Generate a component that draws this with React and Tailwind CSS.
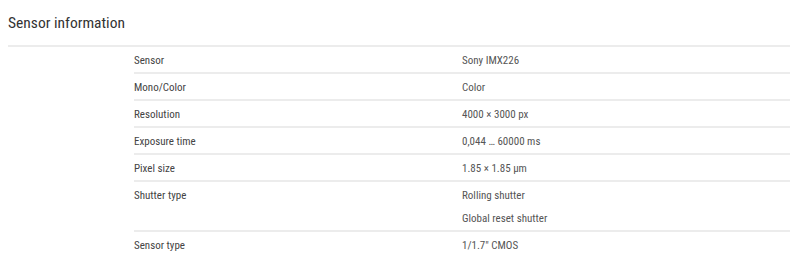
export default function App() {
  const rows = [
    ["Sensor", ["Sony IMX226"]],
    ["Mono/Color", ["Color"]],
    ["Resolution", ["4000 × 3000 px"]],
    ["Exposure time", ["0,044 … 60000 ms"]],
    ["Pixel size", ["1.85 × 1.85 µm"]],
    ["Shutter type", ["Rolling shutter", "Global reset shutter"]],
    ["Sensor type", ['1/1.7" CMOS']],
  ];
  return (
    <div className="w-[800px] h-[267px] bg-white pl-[8px] pr-[10px] font-['Roboto_Condensed','Roboto',sans-serif] overflow-hidden">
      <div className="h-[47px] border-b-2 border-[#ececec] pt-[12px]">
        <h2 className="text-[15.5px] leading-[22px] text-[#333] font-normal">Sensor information</h2>
      </div>
      <div className="pl-[126px]">
        {rows.map(([label, values], i) => (
          <div
            key={label}
            className={`flex text-[11px] leading-[18px] ${i < rows.length - 1 ? "border-b-2 border-[#ececec]" : ""}`}
          >
            <div className="w-[328px] pt-[5px] pb-[2px] text-[#444]">{label}</div>
            <div className="flex flex-col gap-[5px] pt-[5px] pb-[2px] text-[#555]">
              {values.map((v) => (
                <div key={v}>{v}</div>
              ))}
            </div>
          </div>
        ))}
      </div>
    </div>
  );
}
